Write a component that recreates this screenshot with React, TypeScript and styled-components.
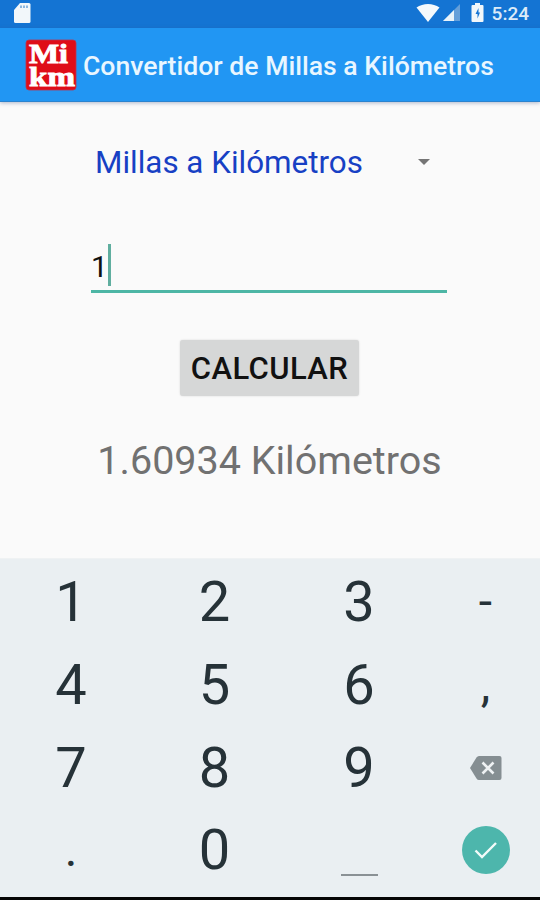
import {useState} from "react";
import styled, {createGlobalStyle} from "styled-components";

const GlobalStyle = createGlobalStyle`
  * {
    box-sizing: border-box;
  }

  body {
    margin: 0;
    background: #fafafa;
    font-family: Roboto, "Liberation Sans", sans-serif;
  }

  button {
    padding: 0;
    border: 0;
    background: none;
    font-family: inherit;
    cursor: pointer;
  }

  svg {
    display: block;
    flex: none;
  }
`

const Screen = styled.div`
  display: flex;
  flex-direction: column;
  width: 540px;
  height: 900px;
  overflow: hidden;
  background: #fafafa;
`

const StatusBar = styled.div`
  display: flex;
  align-items: center;
  justify-content: space-between;
  height: 28px;
  padding: 0 11px 3px 13px;
  background: #1474d3;
`

const StatusIcons = styled.div`
  display: flex;
  align-items: center;
`

const Clock = styled.span`
  margin-left: 8px;
  padding-top: 2px;
  color: #dcebf8;
  font-size: 19px;
  font-weight: 500;
  line-height: 22px;
`

const AppBar = styled.header`
  display: flex;
  align-items: center;
  height: 74px;
  padding: 0 0 0 25px;
  background: #2196f3;
  border-bottom: 1px solid #2a83cf;
  box-shadow: 0 1px 4px rgba(60, 80, 130, 0.4);
`

const Title = styled.h1`
  margin: 2px 0 0 6px;
  color: #e9f6ff;
  font-size: 26.6px;
  font-weight: 500;
  line-height: 32px;
  white-space: nowrap;
`

const Content = styled.main`
  display: flex;
  flex: 1;
  flex-direction: column;
  align-items: center;
`

const Spinner = styled.button`
  display: flex;
  align-items: center;
  justify-content: space-between;
  width: 336px;
  height: 40px;
  margin: 40px 14px 0 0;
  color: #1740c4;
  font-size: 31.4px;
  white-space: nowrap;
`

const Field = styled.div`
  display: flex;
  align-items: flex-start;
  width: 356px;
  height: 49px;
  margin-top: 62px;
  margin-left: -2px;
  border-bottom: 3px solid #4db6a5;
`

const FieldText = styled.span`
  margin-top: 5px;
  color: #111;
  font-size: 30px;
  line-height: 36px;
`

const Caret = styled.span`
  width: 3px;
  height: 42px;
  background: #5fae9f;
`

const CalcButton = styled.button`
  width: 179px;
  height: 56px;
  margin-top: 47px;
  margin-right: 1px;
  border-radius: 3px;
  background: #d6d7d7;
  box-shadow: 0 0 2px rgba(0, 0, 0, 0.15);
  color: #111;
  font-size: 31px;
  font-weight: 500;
  letter-spacing: 0.4px;
  line-height: 57px;
`

const Result = styled.output`
  margin-top: 41px;
  margin-right: 1px;
  color: #717171;
  font-size: 39.5px;
  line-height: 48px;
  white-space: nowrap;
`

const Keypad = styled.div`
  display: grid;
  grid-template-columns: 142px 145px 144px 109px;
  grid-template-rows: repeat(4, 82.7px);
  height: 339px;
  padding-top: 2px;
  background: #eaeff2;
  border-top: 1px solid #eff2f3;
`

const Key = styled.button<{$small?: boolean}>`
  display: flex;
  align-items: center;
  justify-content: center;
  color: #263238;
  font-size: ${props => props.$small ? "48px" : "56px"};
  line-height: 82px;
`

const SpaceMark = styled.span`
  width: 37px;
  height: 2px;
  margin-top: 50px;
  background: #8a9195;
`

const DoneCircle = styled.span`
  display: flex;
  align-items: center;
  justify-content: center;
  width: 48px;
  height: 48px;
  border-radius: 50%;
  background: #4db6ac;
`

const BottomEdge = styled.div`
  height: 3px;
  background: #050505;
`

const SdCardIcon = () => (
  <svg width="18" height="22" viewBox="0 0 18 22">
    <path d="M7 1h9a1.5 1.5 0 0 1 1.5 1.5v17A1.5 1.5 0 0 1 16 21H2.5A1.5 1.5 0 0 1 1 19.5V8Z" fill="#f2f7fa" />
    <path d="M8 3.500v2.500M11 3.500v2.500M14 3.500v2.500" stroke="#6ba2d6" strokeWidth="1.500" />
  </svg>
)

const WifiIcon = () => (
  <svg width="24" height="20" viewBox="0 0 24 20">
    <path d="M0.500 4.500C7 -0.300 17 -0.300 23.500 4.500L12 19Z" fill="#f4f9fc" />
  </svg>
)

const SignalIcon = () => (
  <svg width="19" height="19" viewBox="0 0 19 19">
    <path d="M18 1v17H1Z" fill="#659fd9" />
    <path d="M12 7v11H1Z" fill="#e9f3fa" />
  </svg>
)

const BatteryIcon = () => (
  <svg width="13" height="21" viewBox="0 0 13 21">
    <path d="M4 1h5v2h2.500q1 0 1 1v15q0 1 -1 1h-10q-1 0 -1 -1V4q0 -1 1 -1H4Z" fill="#f2f7fa" />
    <path d="M7.500 6 4.500 12h2V16.500L9 10.500H7.500Z" fill="#1474d3" />
  </svg>
)

const SignalGroup = styled.span`
  display: flex;
  align-items: center;
  gap: 2px;
  margin-right: 10px;
`

const Logo = () => (
  <svg width="52" height="52" viewBox="0 0 52 52">
    <rect x="1" y="1" width="50" height="50" rx="3" fill="#df0d18" stroke="#b93650" strokeWidth="0.800" />
    <text
      fill="#fff"
      stroke="#fff"
      strokeWidth="0.900"
      fontFamily="Liberation Serif, serif"
      fontSize="28"
      fontWeight="700"
    >
      <tspan x="4" y="24" textLength="39" lengthAdjust="spacingAndGlyphs">Mi</tspan>
      <tspan x="4" y="47" textLength="46" lengthAdjust="spacingAndGlyphs">km</tspan>
    </text>
  </svg>
)

const ArrowIcon = () => (
  <svg width="14" height="8" viewBox="0 0 14 8">
    <path d="M1 1h12L7 7Z" fill="#757575" />
  </svg>
)

const BackspaceIcon = () => (
  <svg width="32" height="24" viewBox="0 0 32 24">
    <path d="M9 0h20.500A2 2 0 0 1 31.500 2v20a2 2 0 0 1 -2 2H9Q7.500 24 6.500 22.500L0 12L6.500 1.500Q7.500 0 9 0Z" fill="#858e92" />
    <path d="M12.500 6.500l11 11M23.500 6.500l-11 11" stroke="#eef1f3" strokeWidth="2.600" />
  </svg>
)

const CheckIcon = () => (
  <svg width="24" height="20" viewBox="0 0 24 20">
    <path d="M1.500 10.500L8 17L22 3" fill="none" stroke="#f3fbf9" strokeWidth="2.400" />
  </svg>
)

const MILE = 1.60934;

const App = () => {
  const [value, setValue] = useState("1");
  const [result, setResult] = useState(MILE);

  const type = (char: string) => () => setValue(value + char);

  return (
    <>
      <GlobalStyle />
      <Screen>
        <StatusBar>
          <SdCardIcon />
          <StatusIcons>
            <SignalGroup>
              <WifiIcon />
              <SignalIcon />
            </SignalGroup>
            <BatteryIcon />
            <Clock>5:24</Clock>
          </StatusIcons>
        </StatusBar>
        <AppBar>
          <Logo />
          <Title>Convertidor de Millas a Kilómetros</Title>
        </AppBar>
        <Content>
          <Spinner>
            Millas a Kilómetros
            <ArrowIcon />
          </Spinner>
          <Field>
            <FieldText>{value}</FieldText>
            <Caret />
          </Field>
          <CalcButton onClick={() => setResult(Number(value) * MILE)}>CALCULAR</CalcButton>
          <Result>{result} Kilómetros</Result>
        </Content>
        <Keypad>
          <Key onClick={type("1")}>1</Key>
          <Key onClick={type("2")}>2</Key>
          <Key onClick={type("3")}>3</Key>
          <Key $small onClick={type("-")}>-</Key>
          <Key onClick={type("4")}>4</Key>
          <Key onClick={type("5")}>5</Key>
          <Key onClick={type("6")}>6</Key>
          <Key $small onClick={type(",")}>,</Key>
          <Key onClick={type("7")}>7</Key>
          <Key onClick={type("8")}>8</Key>
          <Key onClick={type("9")}>9</Key>
          <Key onClick={() => setValue(value.slice(0, -1))}><BackspaceIcon /></Key>
          <Key $small onClick={type(".")}>.</Key>
          <Key onClick={type("0")}>0</Key>
          <Key onClick={type(" ")}><SpaceMark /></Key>
          <Key>
            <DoneCircle><CheckIcon /></DoneCircle>
          </Key>
        </Keypad>
        <BottomEdge />
      </Screen>
    </>
  );
}

export default App;
